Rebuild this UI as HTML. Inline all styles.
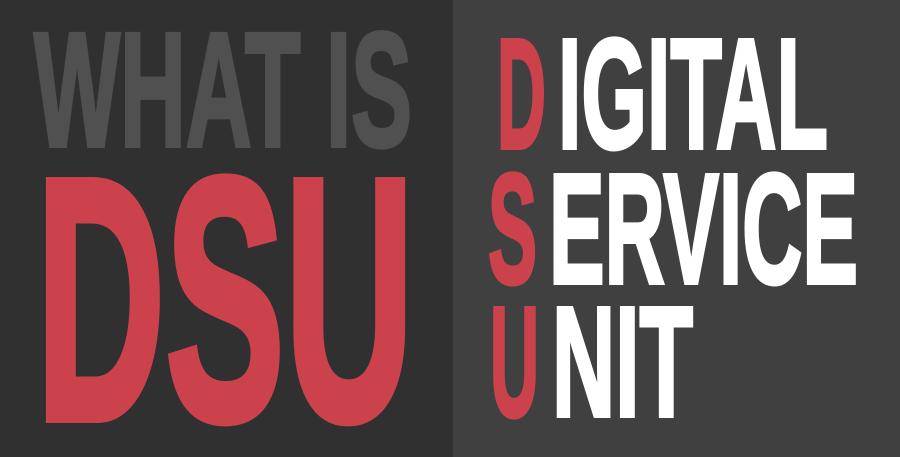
<!DOCTYPE html>
<html><head><style>
html,body{margin:0;padding:0;width:900px;height:457px;overflow:hidden;background:#404040}
svg{display:block;position:absolute;left:0;top:0}
text{font-family:"Liberation Sans",sans-serif;font-weight:bold;stroke-linejoin:miter}
</style></head><body>
<svg width="900" height="457" viewBox="0 0 900 457">
<rect x="0" y="0" width="453" height="457" fill="#303030"/>
<rect x="453" y="0" width="447" height="457" fill="#404040"/>
<text x="34" y="146" font-size="163" fill="#505050" stroke="#505050" stroke-width="4" textLength="378" lengthAdjust="spacingAndGlyphs">WHAT IS</text>
<text x="36" y="419" font-size="346" fill="#cc424c" stroke="#cc424c" stroke-width="8" textLength="378" lengthAdjust="spacingAndGlyphs">DSU</text>
<text x="497" y="148" font-size="157" fill="#cc424c" stroke="#cc424c" stroke-width="4" textLength="49" lengthAdjust="spacingAndGlyphs">D</text>
<text x="558" y="148" font-size="157" fill="#ffffff" stroke="#ffffff" stroke-width="4" textLength="270" lengthAdjust="spacingAndGlyphs">IGITAL</text>
<text x="488" y="283" font-size="157" fill="#cc424c" stroke="#cc424c" stroke-width="4" textLength="49" lengthAdjust="spacingAndGlyphs">S</text>
<text x="549" y="283" font-size="157" fill="#ffffff" stroke="#ffffff" stroke-width="4" textLength="309" lengthAdjust="spacingAndGlyphs">ERVICE</text>
<text x="490" y="416" font-size="157" fill="#cc424c" stroke="#cc424c" stroke-width="4" textLength="49" lengthAdjust="spacingAndGlyphs">U</text>
<text x="552" y="416" font-size="157" fill="#ffffff" stroke="#ffffff" stroke-width="4" textLength="141" lengthAdjust="spacingAndGlyphs">NIT</text>
</svg>
</body></html>
